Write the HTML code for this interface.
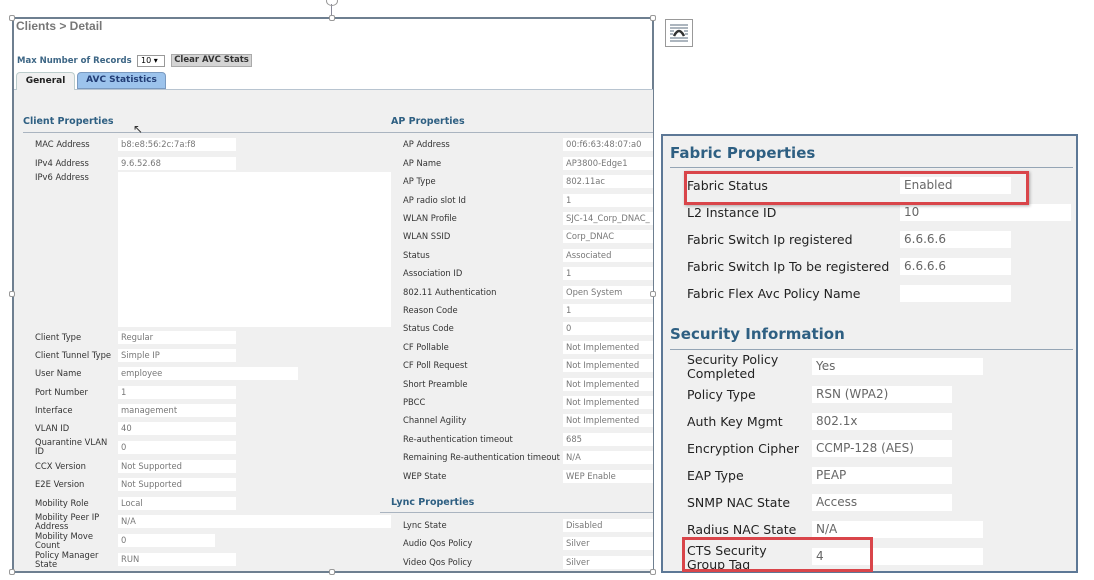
<!DOCTYPE html>
<html><head><meta charset="utf-8"><style>
*{margin:0;padding:0;box-sizing:border-box}
body{width:1094px;height:580px;background:#fff;position:relative;overflow:hidden;font-family:"DejaVu Sans","Liberation Sans",sans-serif}
.a{position:absolute;white-space:nowrap}
.l{font-size:8.4px;color:#333;line-height:9px}
.v{position:absolute;background:#fff;height:13px;font-size:8.4px;color:#777;line-height:13px;padding-left:3px;overflow:hidden}
.h{font-size:9.5px;font-weight:bold;color:#2e5f82}
.L{font-size:12.5px;color:#222;line-height:14px;font-family:"DejaVu Sans",sans-serif}
.V{position:absolute;background:#fff;height:17px;font-size:12px;color:#666;line-height:17px;padding-left:4px}
.H{font-size:15px;font-weight:bold;color:#2e5f82}
</style></head><body>
<div class="a" style="left:12px;top:17px;width:642px;height:556px;border:2px solid #6e7f90"></div>
<div class="a" style="left:14px;top:89px;width:639px;height:482px;background:#f0f0f0;border-top:1px solid #b8c4d0"></div>
<div class="a" style="left:331px;top:4px;width:1px;height:14px;background:#889"></div>
<div class="a" style="left:326px;top:-4px;width:12px;height:10px;border:1px solid #999;border-radius:50%"></div>
<div class="a" style="left:16px;top:19px;font-size:12px;font-weight:bold;color:#777;font-family:'Liberation Sans',sans-serif">Clients &gt; Detail</div>
<div class="a" style="left:17px;top:56px;font-size:8.5px;font-weight:bold;color:#3d6685">Max Number of Records</div>
<div class="a" style="left:137px;top:55px;width:28px;height:12px;border:1px solid #999;background:#fff;font-size:8px;line-height:10px;padding-left:3px">10 ▾</div>
<div class="a" style="left:171px;top:54px;width:81px;height:13px;background:#d4d4d4;border:1px solid #aaa;font-size:8.5px;font-weight:bold;color:#333;line-height:11px;text-align:center">Clear AVC Stats</div>
<div class="a" style="left:16px;top:72px;width:59px;height:18px;background:#f0f0f0;border:1px solid #bcc;border-bottom:none;border-radius:4px 4px 0 0;font-size:9px;font-weight:bold;color:#222;line-height:16px;text-align:center">General</div>
<div class="a" style="left:77px;top:72px;width:89px;height:17px;background:#9cc3ec;border:1px solid #7a9ac0;border-radius:4px 4px 0 0;font-size:9px;font-weight:bold;color:#223d75;line-height:15px;text-align:center">AVC Statistics</div>
<div class="a h" style="left:23px;top:116px">Client Properties</div>
<div class="a" style="left:23px;top:132px;width:360px;border-top:1px solid #aab4c0"></div>
<div class="a h" style="left:391px;top:116px">AP Properties</div>
<div class="a" style="left:380px;top:132px;width:273px;border-top:1px solid #aab4c0"></div>
<div class="a h" style="left:391px;top:497px">Lync Properties</div>
<div class="a" style="left:380px;top:512px;width:273px;border-top:1px solid #aab4c0"></div>
<div class="a" style="left:133px;top:122px;font-size:12px;color:#333">↖</div>

<div class="a l" style="left:35px;top:140px">MAC Address</div><div class="v" style="left:118px;top:138px;width:118px">b8:e8:56:2c:7a:f8</div>
<div class="a l" style="left:35px;top:159px">IPv4 Address</div><div class="v" style="left:118px;top:157px;width:118px">9.6.52.68</div>
<div class="a l" style="left:35px;top:173px">IPv6 Address</div><div class="v" style="left:118px;top:172px;width:273px;height:155px"></div>
<div class="a l" style="left:35px;top:333px">Client Type</div><div class="v" style="left:118px;top:331px;width:118px">Regular</div>
<div class="a l" style="left:35px;top:351px">Client Tunnel Type</div><div class="v" style="left:118px;top:349px;width:118px">Simple IP</div>
<div class="a l" style="left:35px;top:369px">User Name</div><div class="v" style="left:118px;top:367px;width:180px">employee</div>
<div class="a l" style="left:35px;top:388px">Port Number</div><div class="v" style="left:118px;top:386px;width:118px">1</div>
<div class="a l" style="left:35px;top:406px">Interface</div><div class="v" style="left:118px;top:404px;width:118px">management</div>
<div class="a l" style="left:35px;top:424px">VLAN ID</div><div class="v" style="left:118px;top:422px;width:118px">40</div>
<div class="a l" style="left:35px;top:438px">Quarantine VLAN<br>ID</div><div class="v" style="left:118px;top:441px;width:118px">0</div>
<div class="a l" style="left:35px;top:462px">CCX Version</div><div class="v" style="left:118px;top:460px;width:118px">Not Supported</div>
<div class="a l" style="left:35px;top:480px">E2E Version</div><div class="v" style="left:118px;top:478px;width:118px">Not Supported</div>
<div class="a l" style="left:35px;top:499px">Mobility Role</div><div class="v" style="left:118px;top:497px;width:118px">Local</div>
<div class="a l" style="left:35px;top:513px">Mobility Peer IP<br>Address</div><div class="v" style="left:118px;top:515px;width:273px">N/A</div>
<div class="a l" style="left:35px;top:532px">Mobility Move<br>Count</div><div class="v" style="left:118px;top:534px;width:97px">0</div>
<div class="a l" style="left:35px;top:551px">Policy Manager<br>State</div><div class="v" style="left:118px;top:553px;width:118px">RUN</div>

<div class="a l" style="left:403px;top:140px">AP Address</div><div class="v" style="left:563px;top:138px;width:90px">00:f6:63:48:07:a0</div>
<div class="a l" style="left:403px;top:159px">AP Name</div><div class="v" style="left:563px;top:157px;width:90px">AP3800-Edge1</div>
<div class="a l" style="left:403px;top:177px">AP Type</div><div class="v" style="left:563px;top:175px;width:90px">802.11ac</div>
<div class="a l" style="left:403px;top:196px">AP radio slot Id</div><div class="v" style="left:563px;top:194px;width:90px">1</div>
<div class="a l" style="left:403px;top:214px">WLAN Profile</div><div class="v" style="left:563px;top:212px;width:90px">SJC-14_Corp_DNAC_</div>
<div class="a l" style="left:403px;top:232px">WLAN SSID</div><div class="v" style="left:563px;top:230px;width:90px">Corp_DNAC</div>
<div class="a l" style="left:403px;top:251px">Status</div><div class="v" style="left:563px;top:249px;width:90px">Associated</div>
<div class="a l" style="left:403px;top:269px">Association ID</div><div class="v" style="left:563px;top:267px;width:90px">1</div>
<div class="a l" style="left:403px;top:288px">802.11 Authentication</div><div class="v" style="left:563px;top:286px;width:90px">Open System</div>
<div class="a l" style="left:403px;top:306px">Reason Code</div><div class="v" style="left:563px;top:304px;width:90px">1</div>
<div class="a l" style="left:403px;top:324px">Status Code</div><div class="v" style="left:563px;top:322px;width:90px">0</div>
<div class="a l" style="left:403px;top:343px">CF Pollable</div><div class="v" style="left:563px;top:341px;width:90px">Not Implemented</div>
<div class="a l" style="left:403px;top:361px">CF Poll Request</div><div class="v" style="left:563px;top:359px;width:90px">Not Implemented</div>
<div class="a l" style="left:403px;top:380px">Short Preamble</div><div class="v" style="left:563px;top:378px;width:90px">Not Implemented</div>
<div class="a l" style="left:403px;top:398px">PBCC</div><div class="v" style="left:563px;top:396px;width:90px">Not Implemented</div>
<div class="a l" style="left:403px;top:416px">Channel Agility</div><div class="v" style="left:563px;top:414px;width:90px">Not Implemented</div>
<div class="a l" style="left:403px;top:435px">Re-authentication timeout</div><div class="v" style="left:563px;top:433px;width:90px">685</div>
<div class="a l" style="left:403px;top:453px">Remaining Re-authentication timeout</div><div class="v" style="left:563px;top:451px;width:90px">N/A</div>
<div class="a l" style="left:403px;top:472px">WEP State</div><div class="v" style="left:563px;top:470px;width:90px">WEP Enable</div>
<div class="a l" style="left:403px;top:521px">Lync State</div><div class="v" style="left:563px;top:519px;width:90px">Disabled</div>
<div class="a l" style="left:403px;top:539px">Audio Qos Policy</div><div class="v" style="left:563px;top:537px;width:90px">Silver</div>
<div class="a l" style="left:403px;top:558px">Video Qos Policy</div><div class="v" style="left:563px;top:556px;width:90px">Silver</div>

<div class="a" style="left:9px;top:15px;width:6px;height:6px;border:1px solid #999;background:#fff;border-radius:2px"></div>
<div class="a" style="left:329px;top:15px;width:6px;height:6px;border:1px solid #999;background:#fff;border-radius:2px"></div>
<div class="a" style="left:650px;top:15px;width:6px;height:6px;border:1px solid #999;background:#fff;border-radius:2px"></div>
<div class="a" style="left:9px;top:291px;width:6px;height:6px;border:1px solid #999;background:#fff;border-radius:2px"></div>
<div class="a" style="left:650px;top:291px;width:6px;height:6px;border:1px solid #999;background:#fff;border-radius:2px"></div>
<div class="a" style="left:9px;top:569px;width:6px;height:6px;border:1px solid #999;background:#fff;border-radius:2px"></div>
<div class="a" style="left:329px;top:569px;width:6px;height:6px;border:1px solid #999;background:#fff;border-radius:2px"></div>
<div class="a" style="left:650px;top:569px;width:6px;height:6px;border:1px solid #999;background:#fff;border-radius:2px"></div>
<svg class="a" style="left:665px;top:19px" width="28" height="28" viewBox="0 0 28 28"><rect x="0.5" y="0.5" width="27" height="27" fill="#fff" stroke="#999"/><g stroke="#5a6b7c" stroke-width="1"><line x1="5" y1="6" x2="23" y2="6"/><line x1="5" y1="9" x2="23" y2="9"/><line x1="5" y1="12" x2="9" y2="12"/><line x1="19" y1="12" x2="23" y2="12"/><line x1="5" y1="15" x2="8" y2="15"/><line x1="20" y1="15" x2="23" y2="15"/><line x1="5" y1="19" x2="23" y2="19"/><line x1="5" y1="22" x2="23" y2="22"/></g><path d="M9 17 Q14 7 19 17" fill="none" stroke="#333" stroke-width="2.5"/></svg>

<div class="a" style="left:661px;top:134px;width:417px;height:439px;border:2px solid #5d7896;background:#f0f0f0"></div>
<div class="a H" style="left:670px;top:144px">Fabric Properties</div>
<div class="a" style="left:670px;top:167px;width:403px;border-top:1px solid #95a5b5"></div>
<div class="a L" style="left:687px;top:179px">Fabric Status</div><div class="V" style="left:900px;top:177px;width:111px">Enabled</div>
<div class="a L" style="left:687px;top:206px">L2 Instance ID</div><div class="V" style="left:900px;top:204px;width:171px">10</div>
<div class="a L" style="left:687px;top:233px">Fabric Switch Ip registered</div><div class="V" style="left:900px;top:231px;width:111px">6.6.6.6</div>
<div class="a L" style="left:687px;top:260px">Fabric Switch Ip To be registered</div><div class="V" style="left:900px;top:258px;width:111px">6.6.6.6</div>
<div class="a L" style="left:687px;top:287px">Fabric Flex Avc Policy Name</div><div class="V" style="left:900px;top:285px;width:111px"></div>
<div class="a" style="left:684px;top:171px;width:345px;height:34px;border:3px solid #d9454a;box-shadow:1px 1px 3px rgba(0,0,0,.3)"></div>
<div class="a H" style="left:670px;top:325px">Security Information</div>
<div class="a" style="left:670px;top:349px;width:403px;border-top:1px solid #95a5b5"></div>
<div class="a L" style="left:687px;top:353px">Security Policy<br>Completed</div><div class="V" style="left:812px;top:358px;width:171px">Yes</div>
<div class="a L" style="left:687px;top:388px">Policy Type</div><div class="V" style="left:812px;top:386px;width:140px">RSN (WPA2)</div>
<div class="a L" style="left:687px;top:415px">Auth Key Mgmt</div><div class="V" style="left:812px;top:413px;width:140px">802.1x</div>
<div class="a L" style="left:687px;top:442px">Encryption Cipher</div><div class="V" style="left:812px;top:440px;width:140px">CCMP-128 (AES)</div>
<div class="a L" style="left:687px;top:469px">EAP Type</div><div class="V" style="left:812px;top:467px;width:140px">PEAP</div>
<div class="a L" style="left:687px;top:496px">SNMP NAC State</div><div class="V" style="left:812px;top:494px;width:140px">Access</div>
<div class="a L" style="left:687px;top:523px">Radius NAC State</div><div class="V" style="left:812px;top:521px;width:171px">N/A</div>
<div class="a L" style="left:687px;top:544px;height:26px;overflow:hidden">CTS Security<br>Group Tag</div><div class="V" style="left:812px;top:548px;width:171px">4</div>
<div class="a" style="left:682px;top:537px;width:191px;height:35px;border:3px solid #d9454a"></div>
</body></html>
